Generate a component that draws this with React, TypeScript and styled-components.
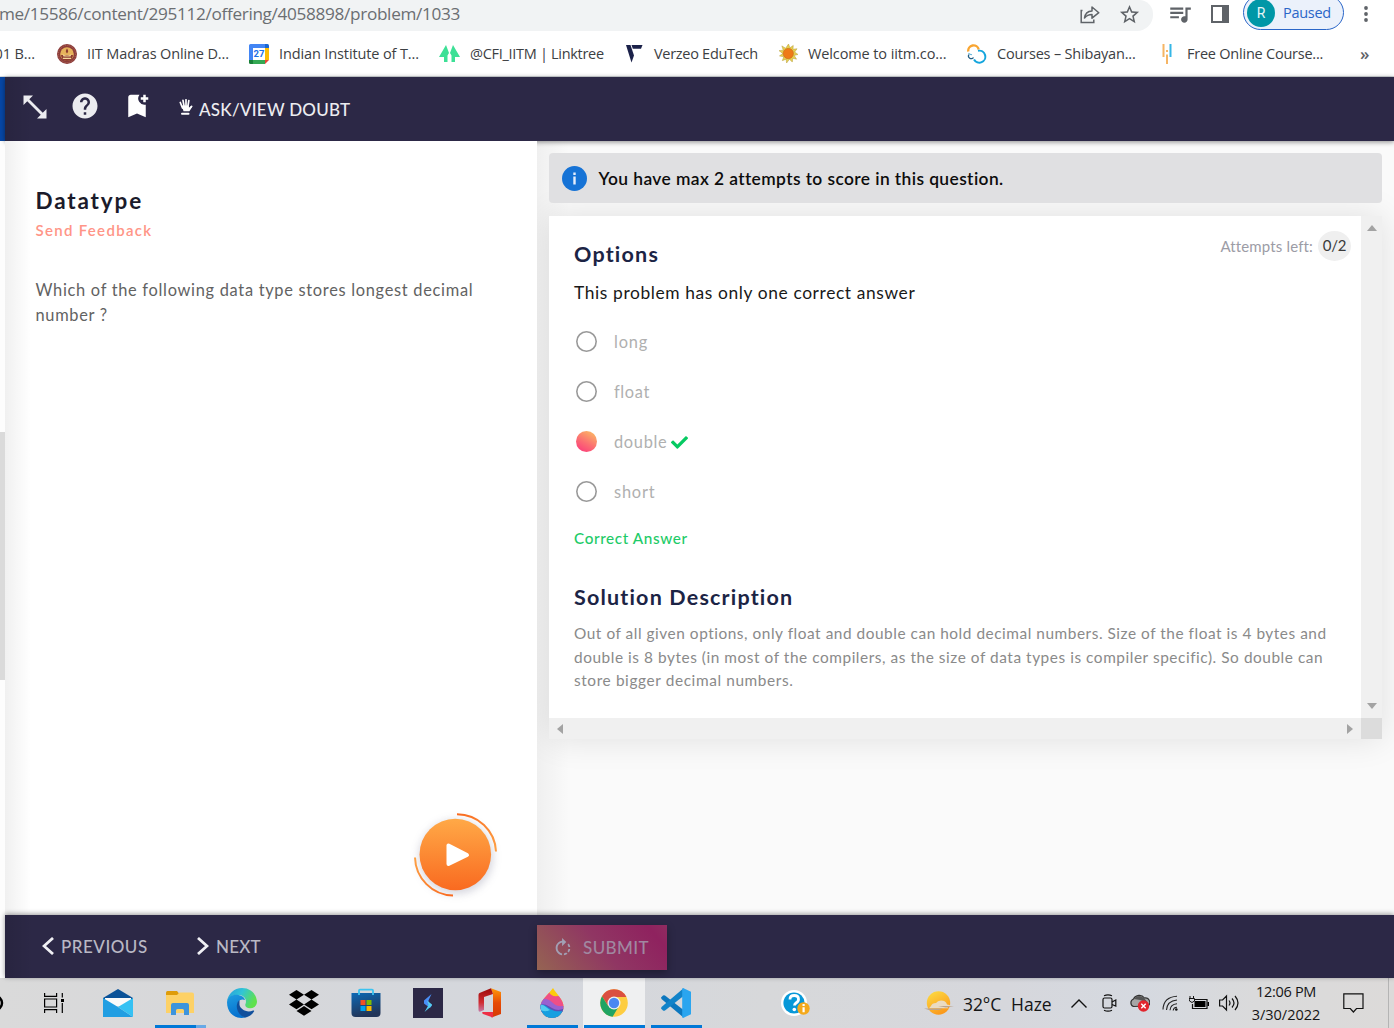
import React from "react";
import styled, { createGlobalStyle, css } from "styled-components";
import { MdHelp, MdBookmarkAdd, MdStarOutline, MdQueueMusic, MdRotateRight } from "react-icons/md";
import { FaCheck } from "react-icons/fa";

const ui = `"Open Sans", "Noto Sans", sans-serif`;
const body = `Lato, "Open Sans", sans-serif`;

const GlobalStyle = createGlobalStyle`
  * { box-sizing: border-box; }
  html, body { margin: 0; padding: 0; background: #fff; overflow: hidden; }
  svg { display: block; flex: none; }
  button { font: inherit; color: inherit; border: 0; background: none; padding: 0; }
`;

const Screen = styled.div`
  width: 1394px; height: 1028px; display: flex; flex-direction: column; overflow: hidden; font-family: ${body};
`;

const Label = styled.span<{ $size: number; $weight?: number; $ls?: number; $color?: string }>`
  display: inline-block;
  font-size: ${p => p.$size}px;
  font-weight: ${p => p.$weight ?? 400};
  letter-spacing: ${p => p.$ls ?? 0}px;
  color: ${p => p.$color ?? "inherit"};
  white-space: pre;
`;

/* Browser chrome */
const AddressRow = styled.div`
  height: 31px; display: flex; align-items: flex-start; background: #fff; font-family: ${ui}; color: #5f6368;
`;
const AddressBar = styled.div`
  width: 1153px; height: 31px; padding-right: 12px; background: #f1f3f4; border-radius: 0 14px 16px 0;
  display: flex; align-items: flex-start; overflow: hidden;
`;
const Url = styled.div`
  width: 460px; height: 28px; line-height: 27px; display: flex; justify-content: flex-end; color: #6b6e72;
`;
const AddressIcons = styled.div`margin-left: auto; height: 28px; display: flex; align-items: center; gap: 18px;`;
const BrowserTools = styled.div`flex: 1; height: 27px; display: flex; align-items: center; padding-left: 14px;`;
const Profile = styled.div`
  width: 101px; height: 35px; margin: -2px 0 0 14px; border: 1.5px solid #2a66c8; border-radius: 18px; background: #ebf1fb;
  display: flex; align-items: center; padding: 0 0 0 3px; gap: 8px; color: #2a66c8;
`;
const Avatar = styled.div`
  width: 28px; height: 28px; border-radius: 50%; background: #0097a7; color: #e8f6f7; text-align: center;
  font: 14px/28px Roboto, sans-serif;
`;
const Bookmarks = styled.div`
  height: 46px; display: flex; align-items: center; border-bottom: 1px solid #d5d9dc; background: #fff; font-family: ${ui};
  color: #3c4043; overflow: hidden;
`;
const Bookmark = styled.div<{ $w: number; $gap?: number }>`
  width: ${p => p.$w}px; flex: none; display: flex; align-items: center; gap: ${p => p.$gap ?? 10}px;
`;
const Clipped = styled.div`width: 35px; margin-right: 22px; display: flex; justify-content: flex-end; overflow: hidden;`;

/* Page */
const Page = styled.div`flex: 1; display: flex; min-height: 0;`;
const Gutter = styled.div`width: 5px; display: flex; flex-direction: column; background: #fcfcfc;`;
const GutterPart = styled.div<{ $h: number; $bg: string }>`height: ${p => p.$h}px; background: ${p => p.$bg};`;
const Course = styled.div`flex: 1; display: flex; flex-direction: column; min-width: 0;`;
const edge = css`background-image: linear-gradient(90deg, rgba(0,0,0,.09), rgba(0,0,0,0) 28px);`;
const TopBar = styled.header`
  height: 64px; flex: none; background-color: #2c2846; ${edge} color: #ececf0; display: flex; align-items: center; padding-left: 18px;
  position: relative; z-index: 2; box-shadow: 0 1px 5px rgba(0,0,0,.45);
`;
const IconSlot = styled.div<{ $w: number; $up?: number }>`
  width: ${p => p.$w}px; flex: none; display: flex; justify-content: flex-start; padding-bottom: ${p => p.$up ?? 0}px;
`;
const Workspace = styled.main`height: 774px; flex: none; display: flex; overflow: hidden;`;
const Problem = styled.section`
  width: 532px; flex: none; background-color: #fff; background-image: linear-gradient(90deg, rgba(0,0,0,.06), rgba(0,0,0,0) 26px);
  padding: 46px 0 0 30.5px; position: relative; z-index: 3;
`;
const Title = styled.h1`margin: 0; height: 28px; line-height: 28px; font-size: 22px; color: #1b1b2b;`;
const Feedback = styled.div`margin-top: 5px; height: 20px; line-height: 20px; font-size: 15px;`;
const Statement = styled.p`margin: 37px 0 0; line-height: 25px; font-size: 16px; display: flex; flex-direction: column; align-items: flex-start; color: #626262;`;
const PlayButton = styled.button`position: absolute; left: 400px; top: 663px; width: 100px; height: 100px;`;

const Answer = styled.section`
  flex: 1; background: #fafafa linear-gradient(90deg, rgba(0,0,0,.045), rgba(0,0,0,0) 32px); padding: 12px 12px 0;
  display: flex; flex-direction: column; gap: 13px;
`;
const Notice = styled.div`
  height: 50px; border-radius: 4px; background: #e0e0e2; display: flex; align-items: center; gap: 12px; padding-left: 12.5px; color: #0c0c0c;
  position: relative; z-index: 1; line-height: 24px;
  ${Label} { padding-top: 2px; }
`;
const ScrollCard = styled.div`
  width: 833px; height: 523px; display: grid; grid-template-columns: 812px 21px; grid-template-rows: 502px 21px;
  box-shadow: 0 0 32px rgba(0,0,0,.11);
`;
const CardBody = styled.div`background: #fff; padding: 15px 10px 0 25px;`;
const VTrack = styled.div`background: #f0f0f0; display: flex; flex-direction: column; justify-content: space-between; align-items: center; padding: 9px 0;`;
const HTrack = styled.div`background: #f0f0f0; display: flex; justify-content: space-between; align-items: center; padding: 0 8px;`;
const Corner = styled.div`background: #dcdcdc;`;
const CardHead = styled.div`height: 38px; display: flex; justify-content: space-between; align-items: flex-start;`;
const Heading = styled.h2<{ $top: number }>`margin: ${p => p.$top}px 0 0; height: 28px; line-height: 28px; font-size: 21px; color: #1c2445;`;
const Attempts = styled.div`height: 30px; line-height: 28px; display: flex; align-items: center; gap: 5px; color: #9c9ca6;`;
const Count = styled.div`
  width: 33px; height: 30px; border-radius: 50%; background: #efefef; color: #3a3a3a; display: flex; justify-content: center;
`;
const Hint = styled.div`margin-top: 12px; height: 24px; line-height: 24px; color: #191919;`;
const OptionList = styled.ul`list-style: none; margin: 12px 0 0; padding: 0;`;
const Option = styled.li`
  height: 50px; padding-left: 2px; display: flex; align-items: center; color: #b0b0b0; line-height: 24px;
  > svg { margin-left: 4px; }
`;
const Radio = styled.span<{ $on?: boolean }>`
  width: 21px; height: 21px; border-radius: 50%; margin: 0 17px 1px 0;
  ${p => p.$on ? css`background: linear-gradient(30deg, #fb3a7c 5%, #fb6f72 45%, #fbbd64 95%);` : css`box-shadow: inset 0 0 0 1.600px #999;`}
`;
const Verdict = styled.div`margin-top: 11px; height: 20px; line-height: 20px; color: #1ecb68;`;
const Explanation = styled.p`
  margin: 11px 0 0; line-height: 23.6px; color: #8a8a8a; display: flex; flex-direction: column; align-items: flex-start;
`;

const BottomBar = styled.footer`
  height: 63px; flex: none; background-color: #2c2846; ${edge} position: relative; z-index: 4; box-shadow: 0 -1px 5px rgba(0,0,0,.4);
  display: flex; align-items: center; padding-left: 37px; color: #b9b8c4; line-height: 24px;
`;
const NavButton = styled.button<{ $w: number }>`
  width: ${p => p.$w}px; display: flex; align-items: center; gap: 7px; line-height: 24px;
  > svg { margin-top: -1px; }
`;
const Submit = styled.button`
  width: 130px; height: 45px; margin-top: 2px; background: linear-gradient(50deg, #956452 0%, #903663 50%, #8f225f 88%, #8f2c60);
  box-shadow: 0 3px 8px rgba(0,0,0,.3); display: flex; align-items: center; gap: 9px; padding-left: 15px; color: #a088a0; line-height: 24px;
`;

/* Taskbar */
const Taskbar = styled.div`
  height: 50px; flex: none; display: flex; font-family: ${ui}; color: #151515; overflow: hidden;
  background: linear-gradient(90deg, #dadada 0%, #d6d7da 18%, #d4d7dd 40%, #d7d8da 55%, #d6d7dc 72%, #d5d9e0 82%, #dadadb 90%, #dcdad9 100%);
`;
const Task = styled.div<{ $w?: number; $active?: boolean; $line?: string }>`
  width: ${p => p.$w ?? 62}px; flex: none; height: 50px; display: grid; grid-template-rows: 47px 3px; justify-items: center; align-items: center;
  ${p => p.$active && css`background: #eff0f1;`}
  svg { margin-top: 3px; }
  &::after { content: ""; height: 3px; width: ${p => (p.$active ? 61 : p.$line ? 51 : 0)}px; background: ${p => p.$line ?? "transparent"}; }
`;
const Tray = styled.div`flex: 1; display: flex; align-items: center; height: 50px; padding-left: 40px;`;
const TraySlot = styled.div<{ $w: number }>`
  width: ${p => p.$w}px; flex: none; display: flex; justify-content: flex-start; align-items: center;
  ${Label} { padding-top: 2px; }
`;
const Clock = styled.div`width: 68px; display: flex; flex-direction: column; align-items: center; line-height: 23px; margin: 0 23px 0 0;`;
const PeekEdge = styled.div`width: 1px; height: 50px; margin-left: 24px; background: #b4b4b4;`;

const IitLogo = () => (
  <svg width="20" height="20" viewBox="0 0 20 20"><circle cx="10" cy="10" r="10" fill="#8c3b3a"/><circle cx="10" cy="10" r="8.6" fill="none" stroke="#b8755c" strokeWidth=".8" strokeDasharray="1 1"/><circle cx="10" cy="10" r="6.800" fill="#e6b35c"/><path d="M4 11h12a6 6 0 0 1-12 0z" fill="#8d3c30"/><path d="M10 4.500c1.600 2 1.500 3.500 0 5-1.500-1.500-1.600-3 0-5z" fill="#8d3c30"/><path d="M5.500 10q4.500 3 9 0l-1 2.500h-7zM6 13.800h8v1.200H6z" fill="#f4d79b"/></svg>
);
const Calendar = () => (
  <svg width="20" height="20" viewBox="0 0 20 20"><path d="M1.500 0H16v4H4v12H0V1.500A1.500 1.500 0 0 1 1.500 0z" fill="#4285f4"/><path d="M16 0h2.500A1.500 1.500 0 0 1 20 1.500V4h-4z" fill="#1967d2"/><path d="M16 4h4v12h-4z" fill="#fbbc04"/><path d="M4 16h12v4H4z" fill="#34a853"/><path d="M0 16h4v4H1.500A1.500 1.500 0 0 1 0 18.500z" fill="#188038"/><path d="M16 16h4l-4 4z" fill="#ea4335"/><path d="M4 4h12v12H4z" fill="#fff"/><text x="10" y="13.200" fontSize="9.500" textAnchor="middle" fill="#1a6fe8" fontFamily="Roboto" fontWeight="700">27</text></svg>
);
const Linktree = () => (
  <svg width="21" height="18" viewBox="0 0 21 18" fill="#3de096"><path d="M7 0 0 12h5v5h3.500v-6.500L10 8z"/><path d="M14 0 11 8l1.500 2.500V17H16v-5h5z"/></svg>
);
const Verzeo = () => (
  <svg width="17" height="18" viewBox="0 0 17 18" fill="#1b2149"><path d="M0 0h4.500L8 10.500 5.500 17.500z"/><path d="M5.500 0H16.500L15 3.700H6.800z"/></svg>
);
const Sun = () => (
  <svg width="19" height="19" viewBox="0 0 20 20"><path d="m10 0 1.500 4L15 1.500l-.3 4L19 5l-2.500 3.500L20 11l-4 1 2.500 4-4-1-.5 4-3-3-3 4-.5-4-4 1.500L5 13.500.500 12.500 4 10 0 7l4.500-.5L3 2l4 2.500z" fill="#e6cf50" stroke="#b59a35" strokeWidth=".5"/><circle cx="9.800" cy="10" r="5.400" fill="#ee7a17" stroke="#c76a1b" strokeWidth=".6"/></svg>
);
const Rings = () => (
  <svg width="20" height="20" viewBox="0 0 20 20" fill="none" strokeWidth="2"><path d="M1.300 7.500A5.300 5.300 0 0 1 11.700 5.500" stroke="#f9a531" strokeWidth="2.400"/><path d="M11 6.800A6 6 0 1 1 7 15.500" stroke="#14a5dd"/><path d="M2 10.500a2.700 2.700 0 1 0 4.500 3" stroke="#225d82" strokeWidth="1.300"/><path d="M1.500 9q1.500 2 3.500 1.500" stroke="#6db8dc" strokeWidth="1.200"/></svg>
);
const Bars = () => (
  <svg width="10" height="20" viewBox="0 0 10 20"><path d="M.500 0h2v13h-2zM4 10.500h2V20H4z" fill="#f5b565"/><path d="M4 6h2v2H4z" fill="#f5b565"/><path d="M7.500 0h2v13h-2z" fill="#35b6e6"/></svg>
);
const Share = () => (
  <svg width="20" height="19" viewBox="0 0 20 19" fill="none" stroke="#5f6368" strokeWidth="1.500"><path d="M2.500 5.500H1.200v12h12.600v-3"/><path d="M4.500 13c.6-4.500 3.300-6.800 7.500-7V2l6.800 5.700L12 13.200V9.500c-3.300 0-5.500 1-7.500 3.500z" strokeLinejoin="round"/></svg>
);
const Panel = () => (<svg width="18" height="18" viewBox="0 0 18 18"><path d="M0 0h18v18H0zM2 2v14h9V2z" fill="#5f6368" fillRule="evenodd"/></svg>);
const Dots = () => (<svg width="4" height="16" viewBox="0 0 4 16" fill="#5f6368"><circle cx="2" cy="2" r="1.900"/><circle cx="2" cy="8" r="1.900"/><circle cx="2" cy="14" r="1.900"/></svg>);
const Info = () => (
  <svg width="25" height="25" viewBox="0 0 25 25"><circle cx="12.500" cy="12.500" r="12.500" fill="#1673d6"/><path d="M11.300 10.500h2.400v8h-2.400zM11.300 6.500h2.400V9h-2.400z" fill="#e6eefc"/></svg>
);
const Expand = () => (
  <svg width="24" height="24" viewBox="0 0 24 24"><path d="M4 4 20 20" stroke="#ececf0" strokeWidth="2.800"/><path d="M.5.5h9.500l-9.500 9.500zM23.500 23.500h-9.500l9.500-9.500z" fill="#ececf0"/></svg>
);
const Hand = () => (
  <svg width="14" height="17" viewBox="0 0 14 17" fill="none" stroke="#fff" strokeLinecap="round"><path d="M1.300 3.500 3.500 9M4 1.300l1.100 6M7 .8v6.500M9.800 1.600 8.800 8" strokeWidth="1.700"/><path d="M2.800 6.500h6.800l.4 2.200 2.200-1.900 1.200.8-3 4.600H4.500z" fill="#fff" stroke="none"/><path d="M10 10.500 12.700 7.300" strokeWidth="1.500"/><path d="M3 14.800h6.500" strokeWidth="2"/></svg>
);
const Chevron = ({ right }: { right?: boolean }) => (
  <svg width="12" height="18" viewBox="0 0 12 18" fill="none" stroke="#f0f0f4" strokeWidth="2.800"><path d={right ? "M1 1 10 9 1 17" : "M11 1 2 9l9 8"}/></svg>
);
const Arrow = ({ d, w, h }: { d: string; w: number; h: number }) => (
  <svg width={w} height={h} viewBox={`0 0 ${w} ${h}`}><path d={d} fill="#a3a3a3"/></svg>
);
const Play = () => (
  <svg width="100" height="100" viewBox="0 0 100 100"><defs><linearGradient id="play" x2="0" y2="1"><stop stopColor="#ffa947"/><stop offset="1" stopColor="#f96a20"/></linearGradient><linearGradient id="arcA" x2="1" y2="1"><stop stopColor="#f96a20"/><stop offset="1" stopColor="#fda044"/></linearGradient><linearGradient id="arcB" x2="1" y2="1"><stop stopColor="#fda044"/><stop offset="1" stopColor="#f96a20"/></linearGradient><filter id="soft" x="-.3" y="-.3" width="1.600" height="1.600"><feGaussianBlur stdDeviation="4"/></filter></defs><circle cx="51" cy="53" r="37" fill="#8888a0" opacity=".35" filter="url(#soft)"/><circle cx="50.300" cy="50.500" r="35.800" fill="url(#play)"/><path d="M52 10.300A39 39 0 0 1 91 47.500" fill="none" stroke="url(#arcA)" strokeWidth="2"/><path d="M10 53.500A39 39 0 0 0 48 91.500" fill="none" stroke="url(#arcB)" strokeWidth="2"/><path d="M43.500 41.500v18.500L62 51z" fill="#fff" stroke="#fff" strokeWidth="4" strokeLinejoin="round"/></svg>
);

const Cortana = () => (<svg width="21" height="20" viewBox="0 0 21 20"><circle cx="-5" cy="10" r="7" fill="none" stroke="#000" strokeWidth="2.500"/></svg>);
const TaskView = () => (<svg width="20" height="20" viewBox="0 0 20 20" fill="none" stroke="#000" strokeWidth="1.200"><path d="M.6 0v3.400h12V0M.6 6h12v8H.6zM.6 20v-3.400h12V20M18.300 0v4.500M18.300 10v10"/><path d="M17 6h3v3h-3z" fill="#000" stroke="none"/></svg>);
const Mail = () => (<svg width="30" height="28" viewBox="0 0 30 28"><path d="M0 9 15 0l15 9v5H0z" fill="#0b5298"/><path d="M2 9h26v8H2z" fill="#fafafa"/><path d="M0 9v19h30L15 18z" fill="#219ee2"/><path d="m15 18 15-9v19z" fill="#35c1f3"/></svg>);
const Folder = () => (<svg width="28" height="24" viewBox="0 0 28 24"><path d="M0 1.500Q0 0 1.500 0H11l2 2.500V6H0z" fill="#df9c09"/><path d="M0 4h11l2.500-2.500h12.500Q28 1.500 28 3.500V22H0z" fill="#fdd166"/><path d="M5 24V14q0-2 2-2h14q2 0 2 2v10h-5v-4.500q0-1.500-1.500-1.500h-5q-1.500 0-1.500 1.500V24z" fill="#3d94dd"/></svg>);
const Edge = () => (<svg width="30" height="30" viewBox="0 0 30 30"><defs><linearGradient id="eg" x2="1" y2=".4"><stop stopColor="#279bdc"/><stop offset=".5" stopColor="#31c4d7"/><stop offset="1" stopColor="#5fe14d"/></linearGradient><linearGradient id="eb" x2=".3" y2="1"><stop stopColor="#1f9de0"/><stop offset="1" stopColor="#0671cf"/></linearGradient></defs><path d="M15 0C7 0 1 6 0 13.500 2.500 8 7 6.500 12 7c6 .7 8 5 6.500 9-1 2 1 4.500 5 4.300C28.500 20 30 16 30 13.500 29 5 23 0 15 0z" fill="url(#eg)"/><path d="M0 14C1 8.500 6 6 11.500 7c3.500.7 6 2.500 6.500 5-5-2-8 2-7.500 6.500C11 25 15 28 19 29.300 8 32 0 25 0 14z" fill="url(#eb)"/><path d="M12.500 12C8 15 8.500 26 18 29.600c4-.5 7-2.600 9-6 .5-1-.3-1.400-1-1-6 2.500-13-1-13.500-6z" fill="#104f9c"/></svg>);
const Dropbox = () => (<svg width="30" height="26" viewBox="0 0 30 26"><path d="m7.500 0 7.500 4.800-7.500 4.800L0 4.800zM22.500 0 30 4.800l-7.500 4.800L15 4.800zM7.500 9.600l7.500 4.800-7.500 4.800L0 14.400zM22.500 9.600l7.500 4.800-7.500 4.800-7.500-4.800zM15 16l7.500 4.900L15 25.700l-7.500-4.800z"/></svg>);
const Store = () => (<svg width="30" height="30" viewBox="0 0 30 30"><defs><linearGradient id="store" x2=".3" y2="1"><stop stopColor="#0c68b5"/><stop offset="1" stopColor="#223558"/></linearGradient></defs><path d="M.5 5h29v20q0 4-4 4h-21q-4 0-4-4z" fill="url(#store)"/><path d="M8 7V2.500Q8 1.700 9 1.700h12q1 0 1 .8V7" fill="none" stroke="#3cc3f0" strokeWidth="1.800"/><path d="M9.500 12h5v5h-5z" fill="#f25022"/><path d="M15.500 12h5v5h-5z" fill="#7fba00"/><path d="M9.500 18h5v5h-5z" fill="#00a4ef"/><path d="M15.500 18h5v5h-5z" fill="#ffb900"/></svg>);
const Stellar = () => (<svg width="30" height="30" viewBox="0 0 30 30"><path d="M0 0h30v30H0z" fill="#2c2846"/><path d="m18.500 6-3 6.500v2.500l3.500 2-2 3-6-4.500v-3z" fill="#4a8ff5"/><path d="m14 12.500 5 4-.5 1.500L11.500 24l3.500-6 .500-1.500z" fill="#55cdf0"/></svg>);
const Office = () => (<svg width="24" height="30" viewBox="0 0 24 30"><defs><linearGradient id="off" x2="0" y2="1"><stop stopColor="#ff9908"/><stop offset=".5" stopColor="#e64a05"/><stop offset="1" stopColor="#d53a05"/></linearGradient><linearGradient id="offl" x2="0" y2="1"><stop stopColor="#9c0b0b"/><stop offset=".6" stopColor="#d12c31"/><stop offset="1" stopColor="#c67aa7"/></linearGradient></defs><path d="M13 .3 23 4v22l-9.500 3.500-1-5.500H15V6z" fill="url(#off)"/><path d="M13 .3 1.500 5Q.5 5.500.5 7v15q0 2 1.500 1.700L6 22V9l9-3z" fill="url(#offl)"/><path d="M4.500 24H15v5.500L5 26q-1.500-1-.5-2z" fill="#ee2f46"/></svg>);
const Paint = () => (<svg width="24" height="30" viewBox="0 0 24 30"><defs><clipPath id="drop"><path d="M13 0c4 7 10.500 11.500 10.500 18.500a11.500 11.500 0 0 1-23 0C.5 12 8 7 13 0z"/></clipPath></defs><g clipPath="url(#drop)"><path d="M0 0h24v30H0z" fill="#fdcb0c"/><path d="M0 4h9q2 5 9 4l6 2v14H0z" fill="#ef4f86"/><path d="M0 10c7 1 9 1 13 5 3 3 6 3.500 11 3v7H0z" fill="#9b61d0"/><path d="M0 17c6-1.500 8 1 12 3 4 2.500 8 2.500 12 .5V30H0z" fill="#5b50b5"/><path d="M0 17c5-1.500 7 2 11 4.500 4 2 8 2.500 13 1V30H0z" fill="#169fe0"/><path d="M0 17c4-1 6 3 10 5-4 2-7 1-10 0z" fill="#54cdf0"/></g></svg>);
const Chrome = () => (<svg width="28" height="28" viewBox="0 0 28 28"><circle cx="14" cy="14" r="13.800" fill="#fdcd41"/><path d="M14 .2A13.800 13.800 0 0 0 2 7.200L8.300 17 14 14l1-6h11.400A13.800 13.800 0 0 0 14 .2z" fill="#db4f40"/><path d="M2 7.200a13.800 13.800 0 0 0 10.600 20.500L19 17l-5-3-5.700 3.200z" fill="#1fa463"/><circle cx="14" cy="14" r="6.500" fill="#f1f1f1"/><circle cx="14" cy="14" r="5.200" fill="#4b87f2"/></svg>);
const VSCode = () => (<svg width="30" height="30" viewBox="0 0 30 30"><path d="m0 9.500 2-2q1-.7 2 0L22.500 22v7.500L.5 11z" fill="#0c77be"/><path d="m0 20.500 2 2q1 .7 2 0L22.500 8V.3L.5 19z" fill="#1183c9"/><path d="M22 0 30 3.700v22.600L22 30q-1-.2-.8-1.200V1.200Q21 .2 22 0z" fill="#2aa5ef"/></svg>);
const HelpTip = () => (<svg width="30" height="27" viewBox="0 0 30 27"><circle cx="13" cy="13" r="13" fill="#fff"/><circle cx="13" cy="13" r="10.600" fill="#0798d8"/><path d="M9 9.500q0-4 4.200-4 4.300 0 4.300 3.700 0 2.300-2.500 3.800-1.500 1-1.500 2.500" fill="none" stroke="#fff" strokeWidth="2.800"/><circle cx="13.300" cy="19.500" r="1.800" fill="#fff"/><circle cx="22.500" cy="18.500" r="6.200" fill="#f4a91c"/><path d="M21.500 17.300h2.200v5h-2.200zM21.500 14h2.200v2h-2.200z" fill="#fff"/></svg>);
const Haze = () => (<svg width="30" height="24" viewBox="0 0 30 24"><defs><linearGradient id="sun" x2=".5" y2="1"><stop stopColor="#fddf45"/><stop offset="1" stopColor="#fb9a1c"/></linearGradient></defs><circle cx="14.500" cy="12" r="11.700" fill="url(#sun)"/><path d="M7 15q1-3 5-3 1.500-2.500 5-2.500 5 0 6 4 3 0 4 1.700H28l-5 1 2 1H5z" fill="#eadbc2"/><path d="M0 17.500h19l-4 1.500H5zM14 15h16l-8 1.500z" fill="#b9a490"/></svg>);
const Up = () => (<svg width="16" height="9" viewBox="0 0 16 9" fill="none" stroke="#111" strokeWidth="1.400"><path d="m.5 8.500 7.500-7.500 7.500 7.500"/></svg>);
const Camera = () => (<svg width="15" height="18" viewBox="0 0 15 18" fill="none" stroke="#111" strokeWidth="1.200"><rect x="1" y="4" width="9" height="10" rx="1.500"/><path d="m10 8 3.800-2v6L10 10.500M2 1.800Q6 0 10 1.800M2 16.200q4 1.800 8 0"/></svg>);
const Cloud = () => (<svg width="21" height="18" viewBox="0 0 21 18"><path d="M4.500 12.500a4 4 0 0 1 0-7.500A6.500 6.500 0 0 1 15.500 4 4.500 4.500 0 0 1 19 12z" fill="#a6a6a6" stroke="#333" strokeWidth="1.200"/><path d="M5 5Q9-.5 15 4l4 5-8-3z" fill="#555"/><circle cx="14.500" cy="12" r="5.700" fill="#e2252d"/><path d="m12.300 9.800 4.400 4.400m0-4.400-4.400 4.400" stroke="#fff" strokeWidth="1.400"/></svg>);
const Wifi = () => (<svg width="17" height="16" viewBox="0 0 17 16" fill="none" stroke="#222" strokeWidth="1.100"><path d="M1 14.500Q1.500 2 15 1.200M4.500 15Q5 6 15 5M8 15.300q.5-6 7-6.500M11.200 15.500q.3-3 3.800-3.300"/><circle cx="14.300" cy="14.500" r="1.300" fill="#111" stroke="none"/></svg>);
const Battery = () => (<svg width="21" height="14" viewBox="0 0 21 14"><path d="M5 3.500h13v9H3.500V8" fill="none" stroke="#111" strokeWidth="1.200"/><path d="M5.500 5h11v6h-11zM18.500 6h1.500v4h-1.500z" fill="#000"/><path d="M1 0v2.500M4.500 0v2.500M0 2.500h5.500v2.500L3 6.500.500 5z" stroke="#111" strokeWidth="1" fill="none"/></svg>);
const Speaker = () => (<svg width="21" height="18" viewBox="0 0 21 18" fill="none" stroke="#111" strokeWidth="1.200"><path d="M.6 6h3L7.500 2v14L3.600 12h-3zM10 6.500q2 2.500 0 5M13 4.500q4 4.500 0 9M16 2q6 7 0 14"/></svg>);
const Bubble = () => (<svg width="21" height="20" viewBox="0 0 21 20" fill="none" stroke="#111" strokeWidth="1.200"><path d="M.8.8h19.200v14.700h-6.500L10.400 19l-3.100-3.500H.8z"/></svg>);

const bookmarks = [
  { icon: <IitLogo />, text: "IIT Madras Online D...", w: 192, ls: -0.13 },
  { icon: <Calendar />, text: "Indian Institute of T...", w: 190, ls: -0.12 },
  { icon: <Linktree />, text: "@CFI_IITM | Linktree", w: 187, ls: -0.3 },
  { icon: <Verzeo />, text: "Verzeo EduTech", w: 153, ls: -0.29, gap: 11 },
  { icon: <Sun />, text: "Welcome to iitm.co...", w: 188, ls: -0.11 },
  { icon: <Rings />, text: "Courses – Shibayan...", w: 195, ls: -0.19 },
  { icon: <Bars />, text: "Free Online Course...", w: 198, ls: -0.23, gap: 15 },
];

const options = [
  { name: "long", ls: 0.8 },
  { name: "float", ls: 0.62 },
  { name: "double", ls: 0.68, correct: true },
  { name: "short", ls: 0.8 },
];

export default function App() {
  return (
    <Screen>
      <GlobalStyle />
      <AddressRow>
        <AddressBar>
          <Url><Label $size={17.2} $ls={-0.33}>me/15586/content/295112/offering/4058898/problem/1033</Label></Url>
          <AddressIcons><Share /><MdStarOutline size={23} color="#5f6368" /></AddressIcons>
        </AddressBar>
        <BrowserTools>
          <MdQueueMusic size={26} color="#5f6368" /><IconSlot $w={18} /><Panel />
          <Profile><Avatar>R</Avatar><Label $size={14.5} $ls={-0.3}>Paused</Label></Profile>
          <IconSlot $w={20} /><Dots />
        </BrowserTools>
      </AddressRow>
      <Bookmarks>
        <Clipped><Label $size={14.5} $ls={-0.1}>01 B...</Label></Clipped>
        {bookmarks.map(b => (
          <Bookmark key={b.text} $w={b.w} $gap={b.gap}>{b.icon}<Label $size={14.5} $ls={b.ls}>{b.text}</Label></Bookmark>
        ))}
        <Label $size={17} $weight={600} $color="#5f6368">»</Label>
      </Bookmarks>
      <Page>
        <Gutter>
          <GutterPart $h={64} $bg="#0747a6" /><GutterPart $h={291} $bg="#fdfdfd" />
          <GutterPart $h={248} $bg="#dadada" /><GutterPart $h={298} $bg="#fdfdfd" />
        </Gutter>
        <Course>
          <TopBar>
            <IconSlot $w={47} $up={4}><Expand /></IconSlot>
            <IconSlot $w={52} $up={7}><MdHelp size={30} /></IconSlot>
            <IconSlot $w={57} $up={6}><MdBookmarkAdd size={30} color="#fff" /></IconSlot>
            <IconSlot $w={20} $up={3}><Hand /></IconSlot>
            <Label $size={17} $weight={500} $ls={0.24}>ASK/VIEW DOUBT</Label>
          </TopBar>
          <Workspace>
            <Problem>
              <Title><Label $size={22.5} $weight={700} $ls={1.85}>Datatype</Label></Title>
              <Feedback><Label $size={15} $weight={600} $color="#ff9587" $ls={1.3}>Send Feedback</Label></Feedback>
              <Statement>
                <Label $size={16.4} $ls={0.7}>Which of the following data type stores longest decimal</Label>
                <Label $size={16.4} $ls={0.7}>number ?</Label>
              </Statement>
              <PlayButton aria-label="Play"><Play /></PlayButton>
            </Problem>
            <Answer>
              <Notice>
                <Info />
                <Label $size={17.4} $weight={600} $ls={0.4}>You have max 2 attempts to score in this question.</Label>
              </Notice>
              <ScrollCard>
                <CardBody>
                  <CardHead>
                    <Heading $top={9}><Label $size={21.5} $weight={700} $ls={1.2}>Options</Label></Heading>
                    <Attempts><Label $size={15} $ls={0.15}>Attempts left:</Label><Count><Label $size={15} $ls={-0.3}>0/2</Label></Count></Attempts>
                  </CardHead>
                  <Hint><Label $size={17.4} $ls={0.61}>This problem has only one correct answer</Label></Hint>
                  <OptionList>
                    {options.map(o => (
                      <Option key={o.name}>
                        <Radio $on={o.correct} />
                        <Label $size={16.4} $ls={o.ls}>{o.name}</Label>
                        {o.correct && <FaCheck color="#06ca62" size={17} />}
                      </Option>
                    ))}
                  </OptionList>
                  <Verdict><Label $size={15.3} $weight={500} $ls={0.6}>Correct Answer</Label></Verdict>
                  <Heading $top={35}><Label $size={21.5} $weight={700} $ls={1.18}>Solution Description</Label></Heading>
                  <Explanation>
                    <Label $size={15.4} $ls={0.535}>Out of all given options, only float and double can hold decimal numbers. Size of the float is 4 bytes and</Label>
                    <Label $size={15.4} $ls={0.548}>double is 8 bytes (in most of the compilers, as the size of data types is compiler specific). So double can</Label>
                    <Label $size={15.4} $ls={0.61}>store bigger decimal numbers.</Label>
                  </Explanation>
                </CardBody>
                <VTrack><Arrow w={10} h={6} d="M0 6 5 0l5 6z" /><Arrow w={10} h={6} d="M0 0h10L5 6z" /></VTrack>
                <HTrack><Arrow w={6} h={10} d="M6 0v10L0 5z" /><Arrow w={6} h={10} d="M0 0v10l6-5z" /></HTrack>
                <Corner />
              </ScrollCard>
            </Answer>
          </Workspace>
          <BottomBar>
            <NavButton $w={155}><Chevron /><Label $size={17} $weight={500} $ls={0.5}>PREVIOUS</Label></NavButton>
            <NavButton $w={340}><Chevron right /><Label $size={17} $weight={500} $ls={0.2}>NEXT</Label></NavButton>
            <Submit><MdRotateRight size={22} color="#a2a0b4" /><Label $size={17} $weight={500} $ls={0.38}>SUBMIT</Label></Submit>
          </BottomBar>
        </Course>
      </Page>
      <Taskbar>
        <Task $w={21}><Cortana /></Task>
        <Task $w={66}><TaskView /></Task>
        <Task><Mail /></Task>
        <Task $line="linear-gradient(90deg,#0078d7 41px,#68a9e6 41px)"><Folder /></Task>
        <Task><Edge /></Task>
        <Task><Dropbox /></Task>
        <Task><Store /></Task>
        <Task><Stellar /></Task>
        <Task><Office /></Task>
        <Task $line="#0078d7"><Paint /></Task>
        <Task $active $line="#0078d7"><Chrome /></Task>
        <Task $line="#0078d7"><VSCode /></Task>
        <Task $w={177}><HelpTip /></Task>
        <Tray>
          <TraySlot $w={39}><Haze /></TraySlot>
          <TraySlot $w={48}><Label $size={17.5} $ls={-0.1}>32°C</Label></TraySlot>
          <TraySlot $w={60}><Label $size={17.5}>Haze</Label></TraySlot>
          <TraySlot $w={31}><Up /></TraySlot>
          <TraySlot $w={27}><Camera /></TraySlot>
          <TraySlot $w={33}><Cloud /></TraySlot>
          <TraySlot $w={27}><Wifi /></TraySlot>
          <TraySlot $w={30}><Battery /></TraySlot>
          <TraySlot $w={33}><Speaker /></TraySlot>
          <Clock><Label $size={14.5} $ls={-0.3}>12:06 PM</Label><Label $size={14.5}>3/30/2022</Label></Clock>
          <Bubble />
          <PeekEdge />
        </Tray>
      </Taskbar>
    </Screen>
  );
}
